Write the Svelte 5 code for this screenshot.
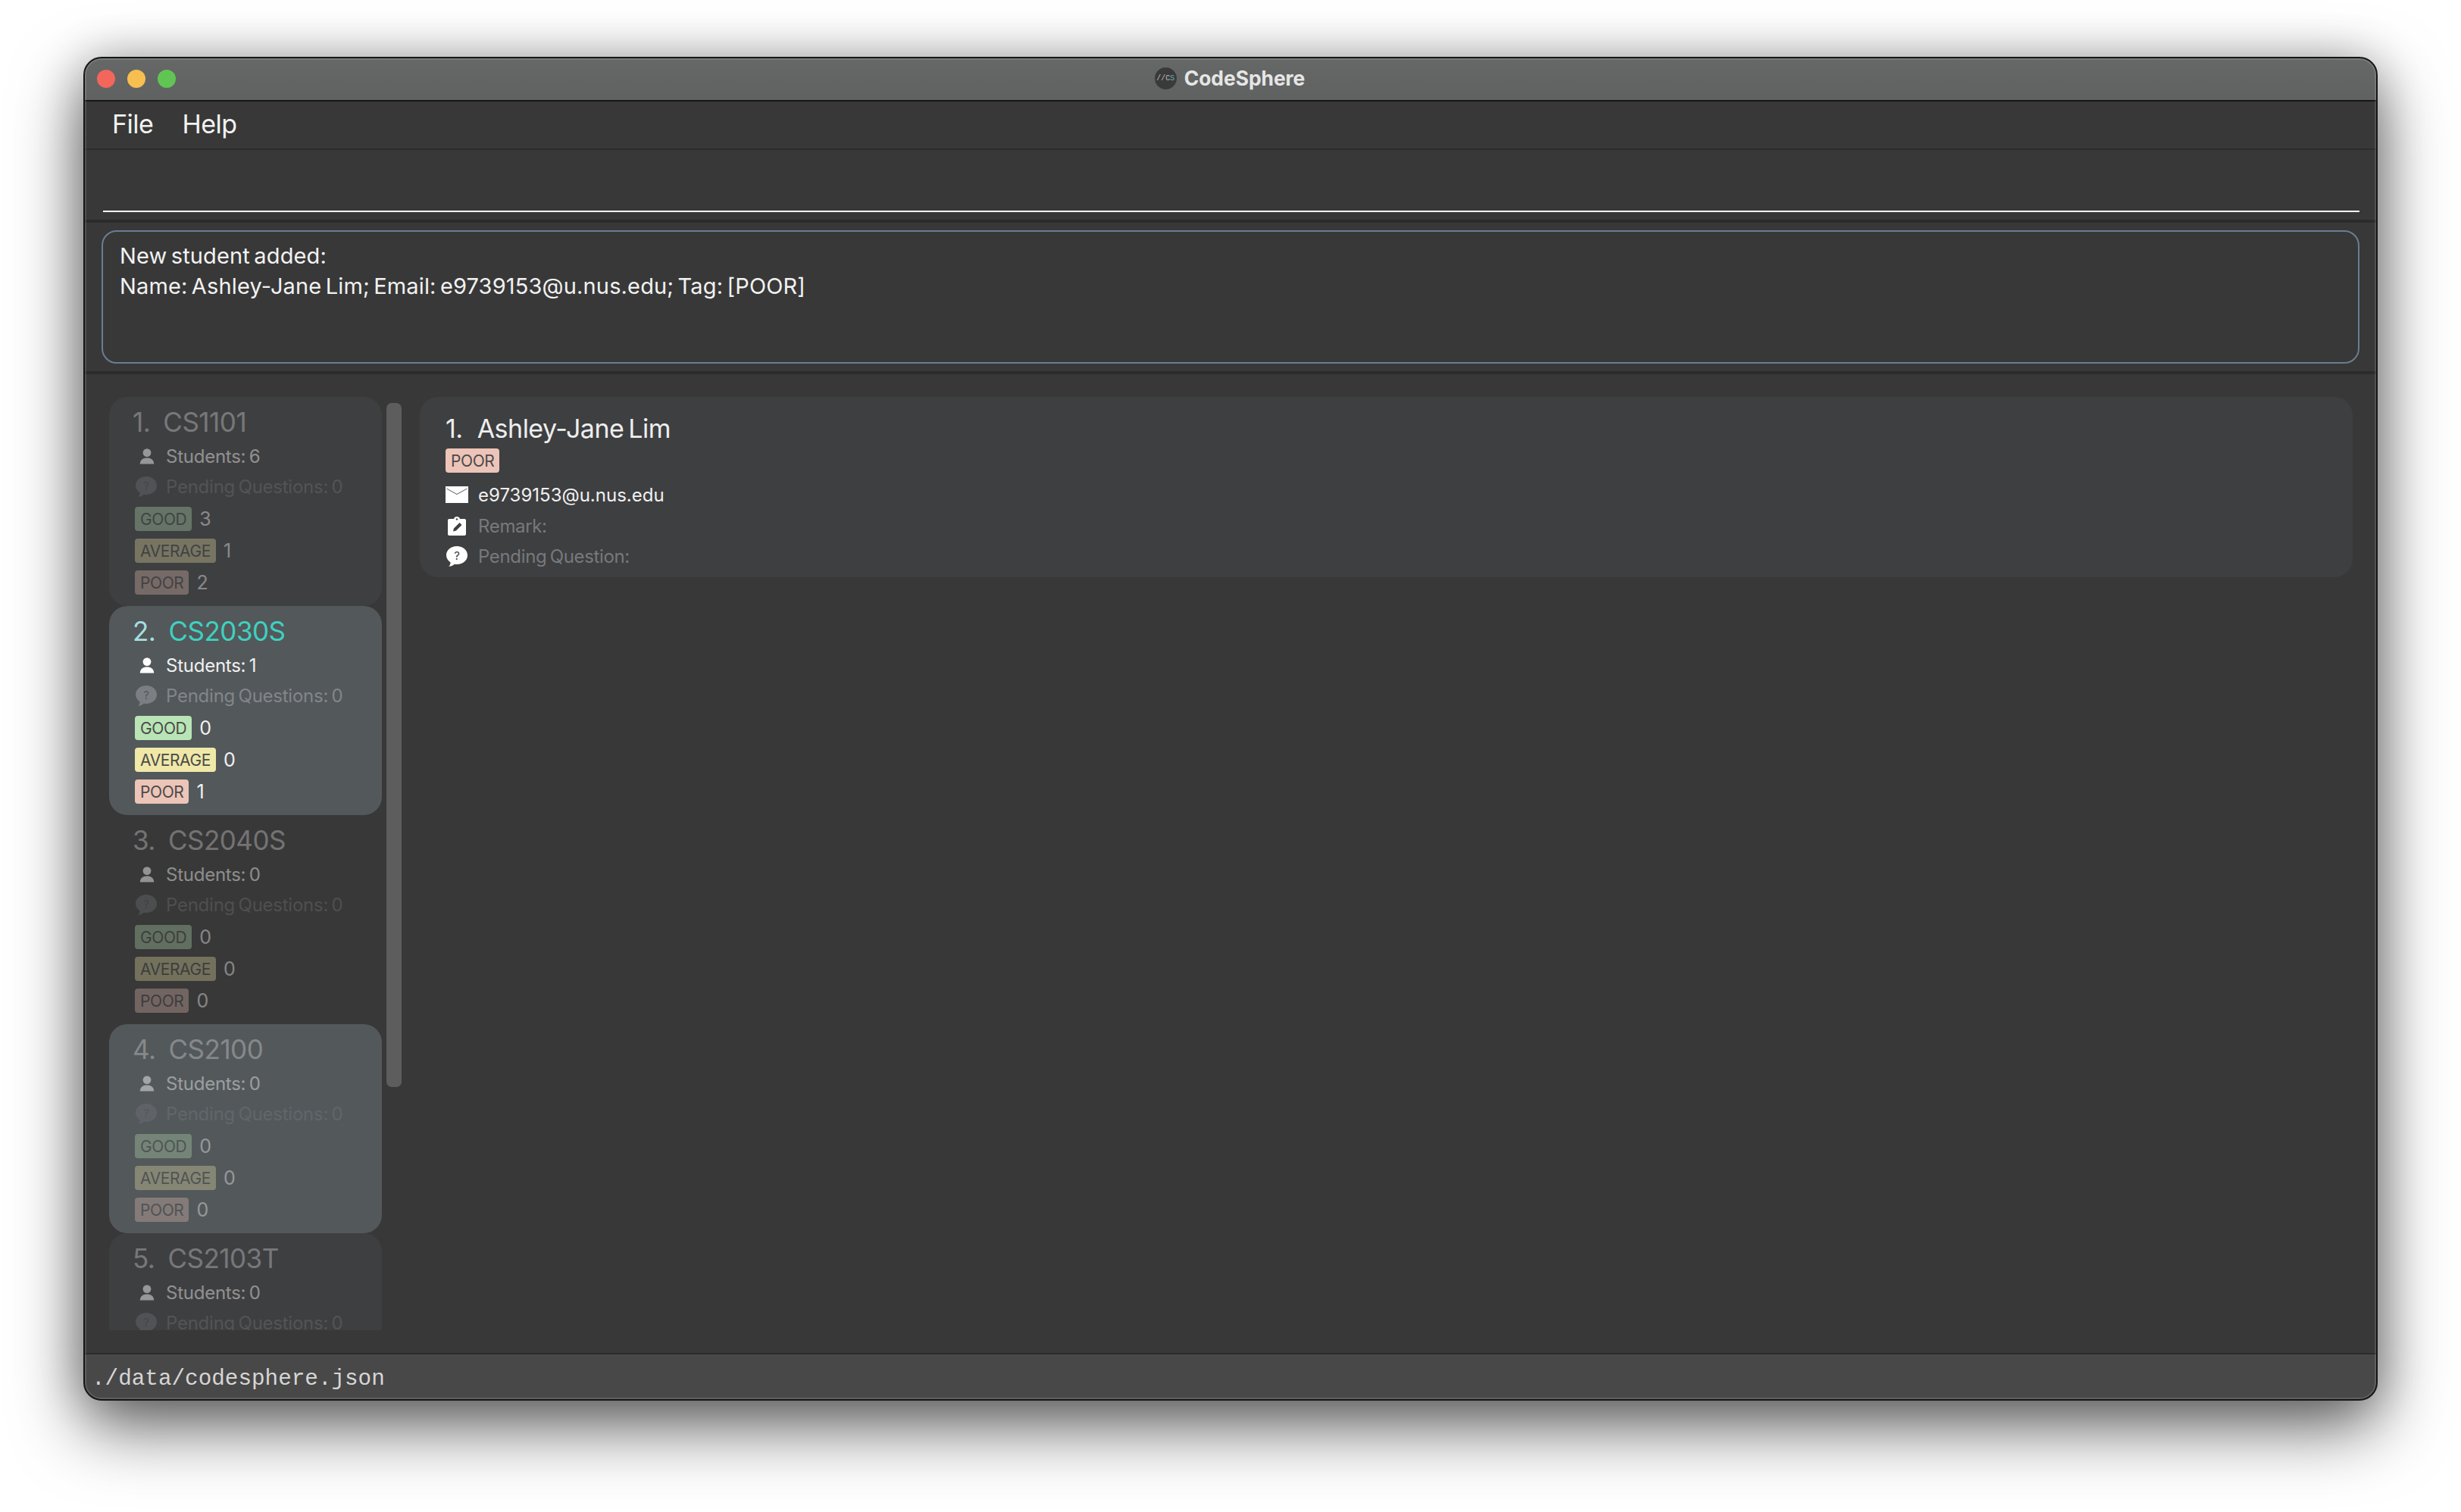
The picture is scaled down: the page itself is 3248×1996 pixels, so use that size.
<script>
  const courses = [
    { n: 1, code: 'CS1101', students: 6, good: 3, avg: 1, poor: 2, cls: 'dim' },
    { n: 2, code: 'CS2030S', students: 1, good: 0, avg: 0, poor: 1, cls: 'selected' },
    { n: 3, code: 'CS2040S', students: 0, good: 0, avg: 0, poor: 0, cls: 'dim plain' },
    { n: 4, code: 'CS2100', students: 0, good: 0, avg: 0, poor: 0, cls: 'dim alt' },
    { n: 5, code: 'CS2103T', students: 0, good: 0, avg: 0, poor: 0, cls: 'dim' }
  ];
</script>

{#snippet person()}
  <svg class="person" viewBox="0 0 20 21" aria-hidden="true">
    <circle cx="10" cy="5.6" r="5.4" fill="currentColor" />
    <path d="M0.8 20.5 C0.8 15 5 12.4 10 12.4 C15 12.4 19.2 15 19.2 20.5 Z" fill="currentColor" />
  </svg>
{/snippet}

{#snippet bubble()}
  <svg class="bubble" viewBox="0 0 28 27" aria-hidden="true">
    <path d="M14 0 C22 0 28 5.4 28 12 C28 18.6 22 24 14 24 C12.8 24 11.8 23.9 10.8 23.7 C8.8 25.6 6.2 26.7 3.2 26.8 C4.8 25.2 5.6 23.4 5.6 21.4 C2.2 19.2 0 15.9 0 12 C0 5.4 6 0 14 0 Z" fill="currentColor" />
    <text x="14" y="17.5" text-anchor="middle" class="q">?</text>
  </svg>
{/snippet}

<div class="page">
  <div class="window">
    <header class="titlebar">
      <div class="lights">
        <span class="light red"></span>
        <span class="light yellow"></span>
        <span class="light green"></span>
      </div>
      <div class="apptitle">
        <span class="logo">//C<b>S</b></span>
        <span>CodeSphere</span>
      </div>
      <div></div>
    </header>

    <nav class="menu">
      <span>File</span>
      <span>Help</span>
    </nav>

    <section class="command"><div class="underline"></div></section>

    <section class="result">
      <div class="resultbox">
        <div>New student added:</div>
        <div>Name: Ashley-Jane Lim; Email: e9739153@u.nus.edu; Tag: [POOR]</div>
      </div>
    </section>

    <main class="content">
      <div class="list">
        {#each courses as c}
          <article class="course {c.cls}">
            <div class="ctitle"><span class="num">{c.n}.</span><span class="code">{c.code}</span></div>
            <div class="row students">{@render person()}<span>Students: {c.students}</span></div>
            <div class="row pending">{@render bubble()}<span>Pending Questions: 0</span></div>
            <div class="tagrow"><span class="tag good">GOOD</span><span class="count">{c.good}</span></div>
            <div class="tagrow"><span class="tag average">AVERAGE</span><span class="count">{c.avg}</span></div>
            <div class="tagrow"><span class="tag poor">POOR</span><span class="count">{c.poor}</span></div>
          </article>
        {/each}
      </div>
      <div class="scrolltrack"><div class="thumb"></div></div>

      <div class="detail">
        <article class="student">
          <div class="sname"><span class="snum">1.</span><span>Ashley-Jane Lim</span></div>
          <span class="tag poor stag">POOR</span>
          <div class="srow email">
            <span class="iconbox">
              <svg class="mail" viewBox="0 0 30 22" aria-hidden="true">
                <rect width="30" height="22" fill="#fff" />
                <path d="M1.5 3 L15 10.5 L28.5 3" fill="none" stroke="#5a5a5c" stroke-width="1" />
              </svg>
            </span>
            <span>e9739153@u.nus.edu</span>
          </div>
          <div class="srow muted remark">
            <span class="iconbox">
              <svg class="clip" viewBox="0 0 24 25" aria-hidden="true">
                <path d="M2 3 H8 C8.4 1.2 10 0 12 0 C14 0 15.6 1.2 16 3 H22 C23.2 3 24 3.8 24 5 V23 C24 24.2 23.2 25 22 25 H2 C0.8 25 0 24.2 0 23 V5 C0 3.8 0.8 3 2 3 Z" fill="#fff" />
                <path d="M7 19.5 L8 15.5 L15.5 8 L18.5 11 L11 18.5 Z" fill="#3e3f41" />
                <circle cx="12" cy="3.4" r="1.2" fill="#3e3f41" />
              </svg>
            </span>
            <span>Remark:</span>
          </div>
          <div class="srow muted question">
            <span class="iconbox white">{@render bubble()}</span>
            <span>Pending Question:</span>
          </div>
        </article>
      </div>
    </main>

    <footer class="status">./data/codesphere.json</footer>
    <div class="frame"></div>
  </div>
</div>

<style>
  :global(body) { margin: 0; background: #fff; }

  .page {
    width: 3248px;
    height: 1996px;
    box-sizing: border-box;
    padding: 75px 110px 0;
    overflow: hidden;
    background: #fff;
    font-family: Inter, "Noto Sans", sans-serif;
  }

  .window {
    position: relative;
    width: 3028px;
    height: 1774px;
    box-sizing: border-box;
    border: 2px solid #161616;
    border-radius: 24px;
    background: #383838;
    box-shadow: 0 34px 90px rgba(0, 0, 0, 0.62), 0 0 60px rgba(0, 0, 0, 0.2);
    display: flex;
    flex-direction: column;
    overflow: hidden;
    color: #f2f2f2;
  }

  .frame {
    position: absolute;
    inset: 0;
    border: 2px solid rgba(255, 255, 255, 0.13);
    border-radius: 22px;
    pointer-events: none;
  }

  .titlebar {
    height: 55px;
    flex: none;
    display: grid;
    grid-template-columns: 1fr auto 1fr;
    align-items: center;
    background: linear-gradient(#666867, #606261);
    border-bottom: 2px solid #161616;
  }
  .lights { display: flex; gap: 16px; padding-left: 16px; margin-top: -1px; }
  .light { width: 24px; height: 24px; border-radius: 50%; }
  .red { background: #f2665c; }
  .yellow { background: #f6bf4f; }
  .green { background: #61c554; }

  .apptitle {
    display: flex;
    align-items: center;
    gap: 10px;
    font-size: 26.5px;
    font-weight: 700;
    color: #e6e6e6;
    letter-spacing: -0.1px;
    margin-top: -3px;
    margin-left: -2px;
  }
  .logo {
    width: 29px;
    height: 29px;
    border-radius: 50%;
    background: #3a3a3a;
    color: #bdbdbd;
    font: 400 10px "Liberation Mono", monospace;
    letter-spacing: 0;
    display: flex;
    align-items: center;
    justify-content: center;
  }
  .logo b { font-weight: 400; color: #62b8bd; }

  .menu {
    height: 64px;
    flex: none;
    box-sizing: border-box;
    display: flex;
    align-items: center;
    gap: 38px;
    padding: 0 0 4px 36px;
    font-size: 34px;
    letter-spacing: -0.5px;
    border-bottom: 2px solid #2c2c2c;
  }

  .command {
    height: 96px;
    flex: none;
    box-sizing: border-box;
    padding: 80px 22px 0 24px;
    border-bottom: 4px solid #2b2b2b;
  }
  .underline { height: 2px; background: #fff; }

  .result {
    height: 200px;
    flex: none;
    box-sizing: border-box;
    padding: 10px 22px;
    border-bottom: 4px solid #2b2b2b;
  }
  .resultbox {
    height: 176px;
    box-sizing: border-box;
    border: 2px solid #6c7d92;
    border-radius: 20px;
    padding: 12px 22px;
    font-size: 29px;
    line-height: 40px;
    letter-spacing: 0.15px;
    word-spacing: -3px;
  }

  .content {
    flex: 1;
    min-height: 0;
    display: flex;
    box-sizing: border-box;
    padding: 30px 31px 0 32px;
  }

  .list {
    width: 360px;
    height: 1232px;
    flex: none;
    overflow: hidden;
  }

  .course {
    height: 276px;
    box-sizing: border-box;
    padding: 11px 0 0 32px;
    border-radius: 24px;
    background: #3e3f41;
  }
  .course.selected, .course.alt { background: #53585b; }
  .course.plain { background: #383838; }

  .ctitle {
    height: 44px;
    display: flex;
    align-items: center;
    font-size: 35px;
    letter-spacing: -0.5px;
    margin-left: -1px;
    color: #eee;
  }
  .num { margin-right: 17px; }
  .selected .num { color: #a5dfdf; }
  .selected .code { color: #3ed1c0; }

  .row {
    display: flex;
    align-items: center;
    font-size: 24px;
    letter-spacing: -0.25px;
    word-spacing: -2px;
    color: #f0f0f0;
  }
  .students { height: 40px; margin-top: 3px; }
  .pending { height: 41px; color: #82868a; margin-bottom: 6px; }

  .person { width: 20px; height: 21px; margin-left: 8px; margin-right: 15px; flex: none; color: #fff; }
  .bubble { width: 28px; height: 27px; margin-left: 3px; margin-right: 12px; flex: none; color: #7b7f84; }
  .q { font-size: 15px; fill: #53585b; font-family: Inter, sans-serif; }

  .tagrow {
    height: 32px;
    margin-bottom: 10px;
    display: flex;
    align-items: center;
    gap: 10px;
    margin-left: 2px;
  }
  .tag {
    display: inline-flex;
    align-items: center;
    height: 32px;
    box-sizing: border-box;
    padding: 0 7px;
    border-radius: 4px;
    font-size: 21px;
    letter-spacing: -0.4px;
    color: #4a4a4a;
  }
  .good { background: #b9e4b5; }
  .average { background: #efe8a8; }
  .poor { background: #edc4b8; }
  .count { font-size: 25px; color: #f0f0f0; }

  .dim .ctitle { opacity: 0.32; }
  .dim .students { opacity: 0.46; }
  .dim .pending { opacity: 0.3; }
  .dim .tag { opacity: 0.32; }
  .dim .count { opacity: 0.42; }

  .scrolltrack {
    width: 20px;
    flex: none;
    margin-left: 6px;
    margin-right: 24px;
    padding-top: 8px;
  }
  .thumb { height: 903px; border-radius: 7px; background: #5d5d5d; }

  .detail { flex: 1; min-width: 0; }
  .student {
    height: 238px;
    box-sizing: border-box;
    padding: 19px 34px 0;
    border-radius: 24px;
    background: #3e3f41;
  }
  .sname {
    height: 44px;
    display: flex;
    align-items: center;
    font-size: 34px;
    letter-spacing: -0.5px;
    word-spacing: -3px;
    color: #eee;
  }
  .snum { margin-right: 19px; }
  .stag { margin-top: 5px; display: flex; width: max-content; }
  .srow {
    display: flex;
    align-items: center;
    font-size: 24px;
    letter-spacing: 0;
    word-spacing: -2px;
    color: #f0f0f0;
  }
  .email { height: 40px; margin-top: 9px; }
  .remark { height: 42px; margin-top: 0; }
  .question { height: 38px; }
  .srow.muted { color: #77797c; letter-spacing: -0.35px; }
  .iconbox { width: 43px; flex: none; display: flex; align-items: center; }
  .mail { width: 30px; height: 22px; }
  .clip { width: 24px; height: 25px; margin-left: 3px; }
  .iconbox .bubble { margin: 0 0 0 1px; color: #fff; }
  .iconbox .q { fill: #3e3f41; }

  .status {
    height: 61px;
    flex: none;
    box-sizing: border-box;
    background: #484848;
    border-top: 2px solid #2b2b2b;
    padding-left: 9px;
    font: 400 29.3px/66px "Liberation Mono", monospace;
    color: #d6d6d6;
  }
</style>
